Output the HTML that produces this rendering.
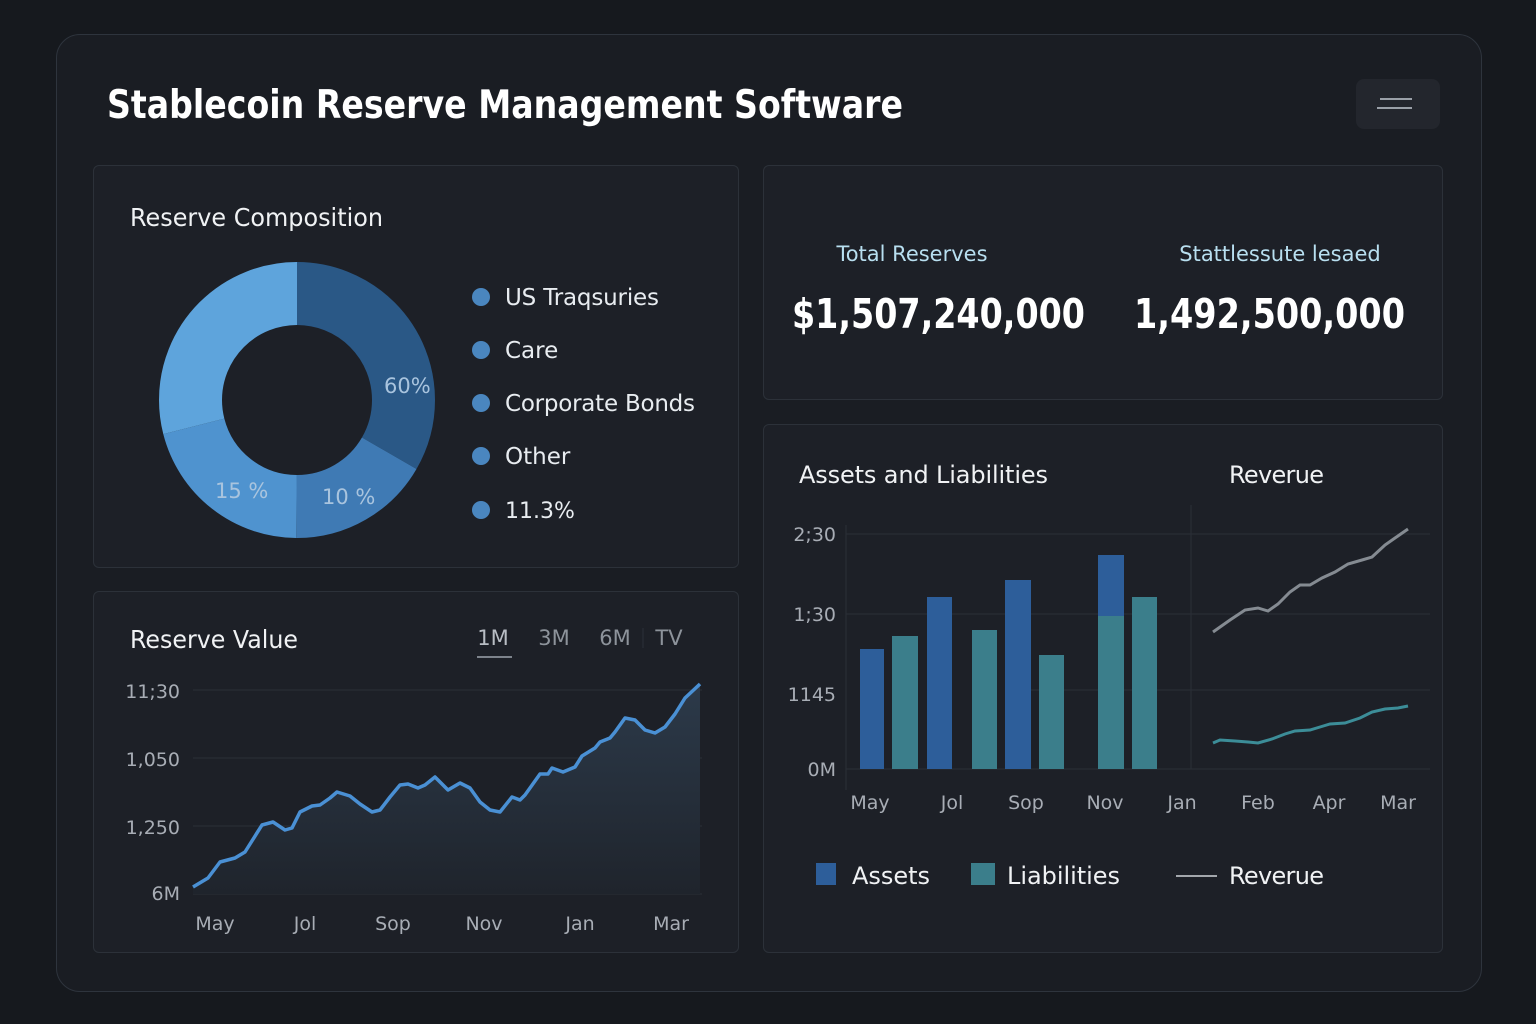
<!DOCTYPE html>
<html><head><meta charset="utf-8"><style>
*{margin:0;padding:0;box-sizing:border-box}
body{width:1536px;height:1024px;background:#16191e;font-family:"DejaVu Sans","Liberation Sans",sans-serif;color:#e8ecf0;position:relative;overflow:hidden}
.panel{position:absolute;left:56px;top:34px;width:1426px;height:958px;background:#1a1d23;border:1px solid #2e343d;border-radius:24px}
.card{position:absolute;background:#1d2027;border:1px solid #2c3139;border-radius:6px}
svg{position:absolute;left:0;top:0}
</style></head><body>
<div class="panel"></div>
<div style="position:absolute;left:1356px;top:79px;width:84px;height:50px;background:#23262d;border-radius:8px"></div>
<div style="position:absolute;left:1380px;top:98px;width:32px;height:2px;background:#9aa0a8"></div>
<div style="position:absolute;left:1377px;top:107px;width:35px;height:2px;background:#9aa0a8"></div>

<div class="card" style="left:93px;top:165px;width:646px;height:403px"></div>
<div class="card" style="left:93px;top:591px;width:646px;height:362px"></div>
<div class="card" style="left:763px;top:165px;width:680px;height:235px"></div>
<div class="card" style="left:763px;top:424px;width:680px;height:529px"></div>

<svg width="1536" height="1024">
<text x="107" y="118" font-size="39" font-weight="bold" fill="#fff" textLength="796" lengthAdjust="spacingAndGlyphs" font-family="DejaVu Sans,sans-serif">Stablecoin Reserve Management Software</text>
<text x="130" y="226" font-size="25" fill="#f0f2f4" textLength="253" lengthAdjust="spacingAndGlyphs" font-family="DejaVu Sans,sans-serif">Reserve Composition</text>
<text x="130" y="648" font-size="25" fill="#f0f2f4" textLength="168" lengthAdjust="spacingAndGlyphs" font-family="DejaVu Sans,sans-serif">Reserve Value</text>
<g transform="rotate(-90 297 400)">
<circle cx="297" cy="400" r="106.5" fill="none" stroke="#2a5886" stroke-width="63" stroke-dasharray="223 700"/>
<circle cx="297" cy="400" r="106.5" fill="none" stroke="#3f7ab4" stroke-width="63" stroke-dasharray="0 223 112 700"/>
<circle cx="297" cy="400" r="106.5" fill="none" stroke="#4f93cf" stroke-width="63" stroke-dasharray="0 335 140 700"/>
<circle cx="297" cy="400" r="106.5" fill="none" stroke="#5ea4dc" stroke-width="63" stroke-dasharray="0 475 195 700"/>
</g>
<g font-size="21" fill="#a9c4de" font-family="DejaVu Sans,sans-serif">
<text x="384" y="393">60%</text><text x="215" y="498">15 %</text><text x="322" y="504">10 %</text>
</g>
<g fill="#4a86bf"><circle cx="481" cy="297" r="9"/><circle cx="481" cy="350" r="9"/><circle cx="481" cy="403" r="9"/><circle cx="481" cy="456" r="9"/><circle cx="481" cy="510" r="9"/></g>
<g font-size="23" fill="#e8ecf0" font-family="DejaVu Sans,sans-serif" lengthAdjust="spacingAndGlyphs">
<text x="505" y="305" textLength="154">US Traqsuries</text><text x="505" y="358">Care</text><text x="505" y="411" textLength="190">Corporate Bonds</text><text x="505" y="464">Other</text><text x="505" y="518" font-size="22">11.3%</text>
</g>

<g stroke="#2a2f37" stroke-width="1"><line x1="193" y1="690" x2="702" y2="690"/><line x1="193" y1="758" x2="702" y2="758"/><line x1="193" y1="826" x2="702" y2="826"/><line x1="193" y1="894" x2="702" y2="894"/></g>
<defs><linearGradient id="g" x1="0" y1="0" x2="0" y2="1"><stop offset="0" stop-color="#2c3a4a"/><stop offset="1" stop-color="#1f242c"/></linearGradient></defs>
<path d="M193,887 L208,878 220,862 235,858 245,852 262,825 273,822 285,830 292,828 300,812 312,806 320,805 330,798 337,792 350,796 360,804 372,812 380,810 390,797 400,785 408,784 418,788 425,785 435,777 448,790 460,783 470,788 480,802 490,810 500,812 512,797 520,800 525,795 540,774 548,774 552,768 563,772 575,767 582,756 595,748 600,742 610,738 615,732 625,718 635,720 645,730 655,733 665,727 675,714 685,698 700,684 L700,894 193,894Z" fill="url(#g)"/>
<path d="M193,887 L208,878 220,862 235,858 245,852 262,825 273,822 285,830 292,828 300,812 312,806 320,805 330,798 337,792 350,796 360,804 372,812 380,810 390,797 400,785 408,784 418,788 425,785 435,777 448,790 460,783 470,788 480,802 490,810 500,812 512,797 520,800 525,795 540,774 548,774 552,768 563,772 575,767 582,756 595,748 600,742 610,738 615,732 625,718 635,720 645,730 655,733 665,727 675,714 685,698 700,684" fill="none" stroke="#4a90d4" stroke-width="3.5" stroke-linejoin="round"/>
<g font-size="19" fill="#a8adb5" font-family="DejaVu Sans,sans-serif" text-anchor="end">
<text x="180" y="698">11;30</text><text x="180" y="766">1,050</text><text x="180" y="834">1,250</text><text x="180" y="900">6M</text></g>
<g font-size="19" fill="#a8adb5" font-family="DejaVu Sans,sans-serif" text-anchor="middle">
<text x="215" y="930">May</text><text x="305" y="930">Jol</text><text x="393" y="930">Sop</text><text x="484" y="930">Nov</text><text x="580" y="930">Jan</text><text x="671" y="930">Mar</text></g>
<g font-size="21" fill="#8d939b" font-family="DejaVu Sans,sans-serif" text-anchor="middle">
<text x="493" y="645" fill="#b8bdc4">1M</text><text x="554" y="645">3M</text><text x="615" y="645">6M</text><text x="669" y="645">TV</text></g>
<line x1="477" y1="657" x2="512" y2="657" stroke="#7d838b" stroke-width="2"/>
<line x1="643" y1="628" x2="643" y2="648" stroke="#2c3139"/>

<g font-family="DejaVu Sans,sans-serif">
<text x="912" y="261" font-size="21" fill="#b8dff0" text-anchor="middle">Total Reserves</text>
<text x="1280" y="261" font-size="21" fill="#b8dff0" text-anchor="middle">Stattlessute lesaed</text>
<text x="792" y="328" font-size="41" fill="#fff" font-weight="bold" textLength="293" lengthAdjust="spacingAndGlyphs">$1,507,240,000</text>
<text x="1134" y="328" font-size="41" fill="#fff" font-weight="bold" textLength="271" lengthAdjust="spacingAndGlyphs">1,492,500,000</text>
</g>

<g stroke="#2a2f37"><line x1="846" y1="534" x2="1430" y2="534"/><line x1="846" y1="614" x2="1430" y2="614"/><line x1="1010" y1="690" x2="1430" y2="690"/><line x1="846" y1="769" x2="1430" y2="769"/><line x1="846" y1="525" x2="846" y2="790"/><line x1="1191" y1="505" x2="1191" y2="769"/></g>
<g fill="#2d5e9a"><rect x="860" y="649" width="24" height="120"/><rect x="927" y="597" width="25" height="172"/><rect x="1005" y="580" width="26" height="189"/><rect x="1098" y="555" width="26" height="61"/></g>
<g fill="#3b7e8b"><rect x="892" y="636" width="26" height="133"/><rect x="972" y="630" width="25" height="139"/><rect x="1039" y="655" width="25" height="114"/><rect x="1098" y="616" width="26" height="153"/><rect x="1132" y="597" width="25" height="172"/></g>
<path d="M1213,632 L1230,620 1245,610 1258,608 1268,611 1278,604 1290,592 1300,585 1310,585 1322,578 1335,572 1348,564 1362,560 1372,557 1385,545 1395,538 1408,529" fill="none" stroke="#858b92" stroke-width="3"/>
<path d="M1213,743 L1220,740 1235,741 1248,742 1258,743 1272,739 1285,734 1295,731 1310,730 1320,727 1330,724 1345,723 1360,718 1372,712 1385,709 1398,708 1408,706" fill="none" stroke="#3c8d98" stroke-width="3"/>
<g font-size="19" fill="#a8adb5" font-family="DejaVu Sans,sans-serif" text-anchor="end">
<text x="836" y="541">2;30</text><text x="836" y="621">1;30</text><text x="836" y="701">1145</text><text x="836" y="776">0M</text></g>
<g font-size="19" fill="#a8adb5" font-family="DejaVu Sans,sans-serif" text-anchor="middle">
<text x="870" y="809">May</text><text x="952" y="809">Jol</text><text x="1026" y="809">Sop</text><text x="1105" y="809">Nov</text><text x="1182" y="809">Jan</text><text x="1258" y="809">Feb</text><text x="1329" y="809">Apr</text><text x="1398" y="809">Mar</text></g>
<g font-family="DejaVu Sans,sans-serif" font-size="24" fill="#f0f2f4" lengthAdjust="spacingAndGlyphs">
<text x="799" y="483" textLength="249">Assets and Liabilities</text><text x="1229" y="483" textLength="95">Reverue</text>
<text x="852" y="884" textLength="78">Assets</text><text x="1007" y="884" textLength="113">Liabilities</text><text x="1229" y="884" textLength="95">Reverue</text></g>
<rect x="816" y="863" width="20" height="22" fill="#2d5e9a"/><rect x="971" y="863" width="24" height="22" fill="#3b7e8b"/>
<line x1="1176" y1="876" x2="1217" y2="876" stroke="#d0d4d8" stroke-width="1.5"/>
</svg>
</body></html>
